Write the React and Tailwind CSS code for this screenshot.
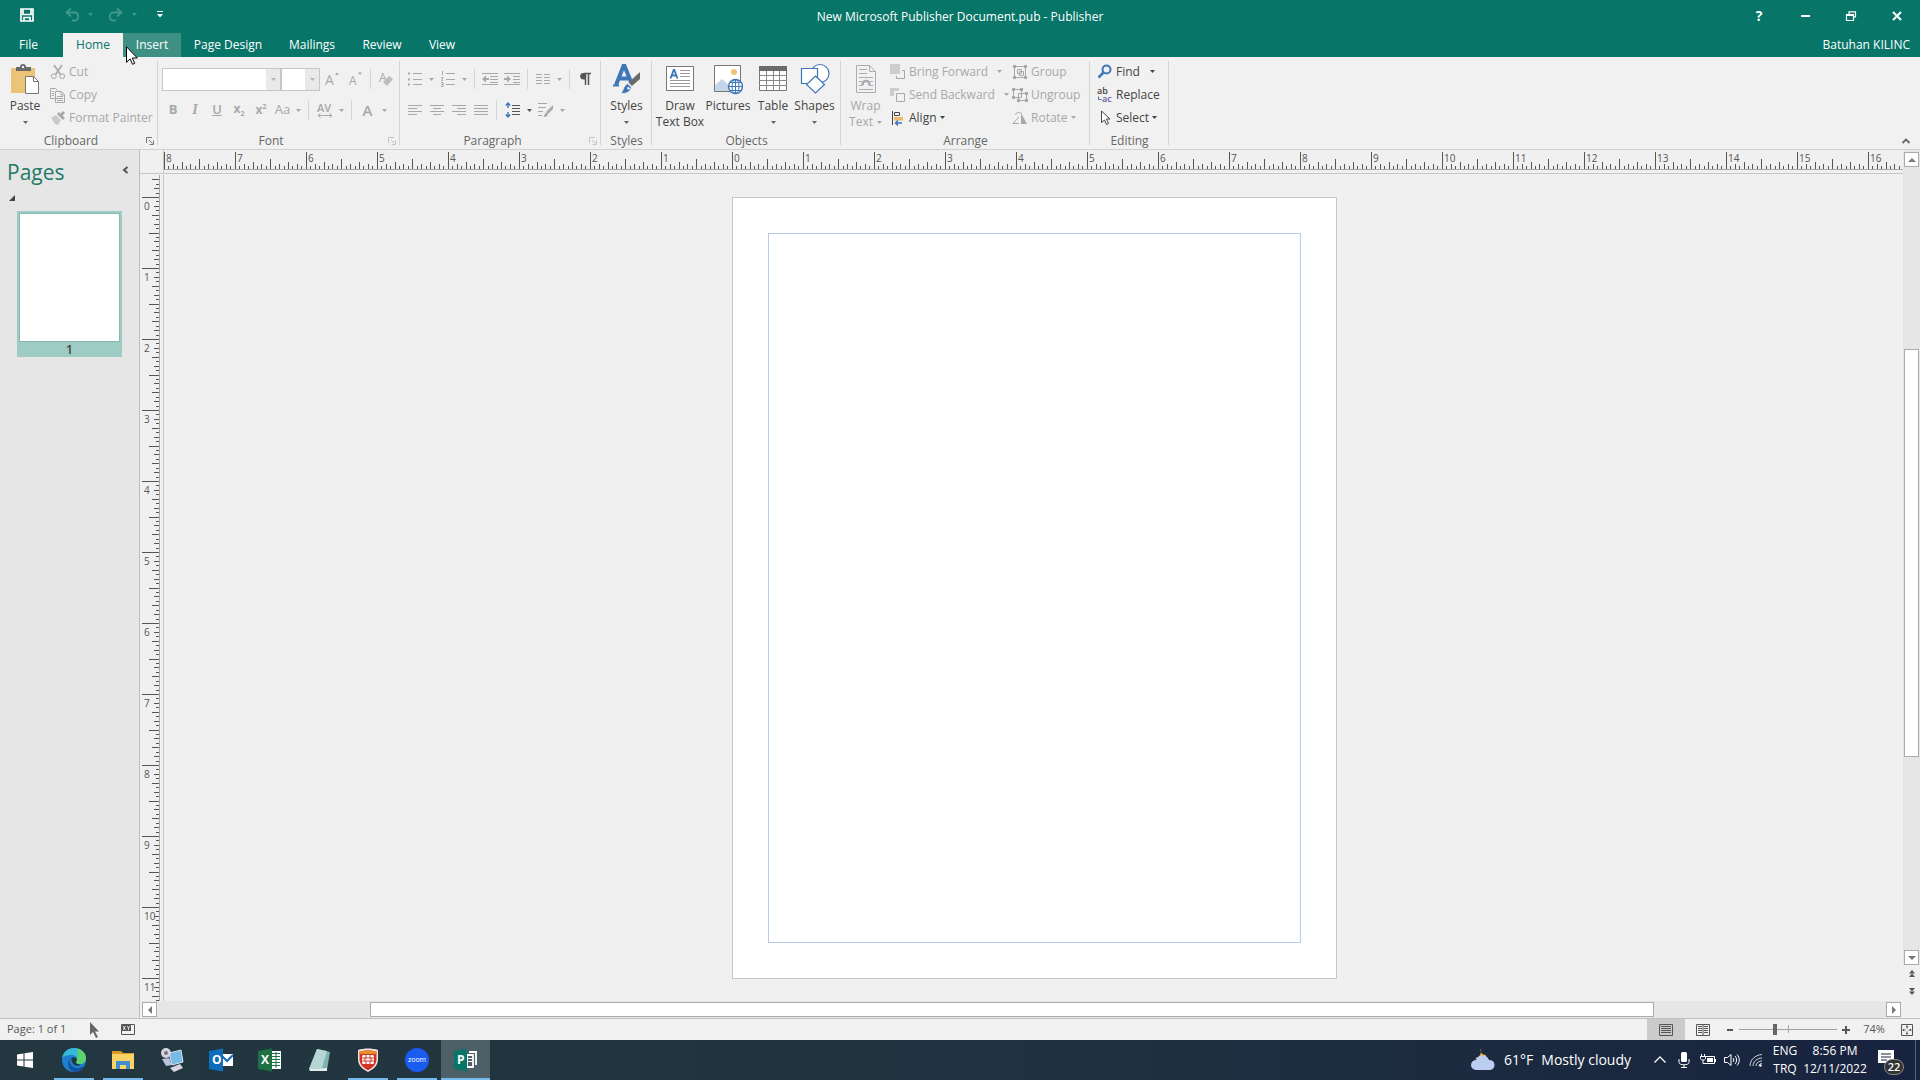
import React, { useState } from 'react';
import clsx from 'clsx';

const INCH = 71;

const Caret = ({ className }) => (
  <svg viewBox="0 0 5 3" className={clsx('w-[5px] h-[3px] shrink-0', className)} fill="currentColor">
    <path d="M0 0h5L2.5 3z" />
  </svg>
);

const Icon = ({ size = 'w-4 h-4', box = '0 0 16 16', className, children }) => (
  <svg viewBox={box} className={clsx(size, 'shrink-0 overflow-visible', className)} fill="none" stroke="currentColor" strokeWidth="1">
    {children}
  </svg>
);

/* ---------- ribbon building blocks ---------- */

const Group = ({ label, width, launcher, dim, children }) => (
  <section className={clsx('relative shrink-0 flex flex-col', width)} aria-label={label}>
    <div className="h-[76px] flex">{children}</div>
    <div className={clsx('h-4 flex items-center justify-center text-[#666666] leading-4', launcher && 'pr-4')}>{label}</div>
    {launcher && (
      <button aria-label={`${label} settings`} className={clsx('absolute right-1 bottom-1', dim ? 'text-[#c4c4c4]' : 'text-[#777777]')}>
        <Icon size="w-2 h-2" box="0 0 8 8">
          <path d="M.5 6V.5H6M3 3l3.500 3.500M7.500 3.500v4h-4" />
        </Icon>
      </button>
    )}
    <div className="absolute right-0 top-1 bottom-1 w-px bg-[#d4d4d4]" />
  </section>
);

const BigButton = ({ icon, lines, width, caret, disabled }) => (
  <button
    disabled={disabled}
    className={clsx('flex flex-col items-center pt-1.5 leading-4 whitespace-nowrap', width, disabled ? 'text-[#a8a8a8]' : 'text-[#444444]')}
  >
    <span className="h-8 flex items-center mb-[3px]">{icon}</span>
    {lines.map((line, i) => (
      <span key={line} className="h-4 flex items-center gap-1">
        {line}
        {caret === 'inline' && i === lines.length - 1 && <Caret />}
      </span>
    ))}
    {caret === 'below' && <span className="h-4 flex items-center text-[#666666]"><Caret /></span>}
  </button>
);

const RowButton = ({ icon, label, caret, disabled, gap }) => (
  <button
    disabled={disabled}
    className={clsx('h-[23px] flex items-center gap-[3px] whitespace-nowrap', disabled ? 'text-[#a8a8a8]' : 'text-[#444444]')}
  >
    {icon}
    <span>{label}</span>
    {caret && <Caret className={gap} />}
  </button>
);

const Tool = ({ width = 'w-[22px]', label, enabled, caret, children }) => (
  <button
    aria-label={label}
    disabled={!enabled}
    className={clsx('h-6 shrink-0 flex items-center justify-center gap-1.5', width, enabled ? 'text-[#555555]' : 'text-[#a8a8a8]')}
  >
    {children}
    {caret && <Caret />}
  </button>
);

const Divider = () => <div className="w-px h-5 mx-1 shrink-0 bg-[#d4d4d4]" />;

/* ---------- ribbon groups ---------- */

const PasteIcon = () => (
  <svg viewBox="0 0 30 32" className="w-[30px] h-8">
    <path d="M1 5h24v25H1z" fill="#ecc477" />
    <path d="M6 4h4a3 3 0 0 1 6 0h5v4H6z" fill="#6a6a6a" />
    <circle cx="13" cy="4" r="1.200" fill="#f1f1f1" />
    <path d="M15.500 13.500h8l5 5v12h-13z" fill="#fff" stroke="#777" />
    <path d="M23.500 13.500v5h5" fill="none" stroke="#777" />
  </svg>
);

const Clipboard = () => (
  <Group label="Clipboard" width="w-[158px]" launcher>
    <BigButton width="w-[50px]" icon={<PasteIcon />} lines={['Paste']} caret="below" />
    <div className="pt-[3px]">
      <RowButton
        disabled
        label="Cut"
        icon={
          <Icon>
            <path d="M4 1l6.500 9.500M12 1L5.500 10.500" strokeWidth="1.600" />
            <circle cx="3.800" cy="12.200" r="2.400" />
            <circle cx="12.200" cy="12.200" r="2.400" />
          </Icon>
        }
      />
      <RowButton
        disabled
        label="Copy"
        icon={
          <Icon>
            <path d="M7 11.500H.5v-10h5l2 2M5.500 4.500h6l3 3v8h-9zM11 4.500v3.500h3.500M2 4.500h2M2 6.500h2M2 8.500h2M7 9.500h6M7 11.500h6M7 13.500h6" />
          </Icon>
        }
      />
      <RowButton
        disabled
        label="Format Painter"
        icon={
          <Icon>
            <path d="M1 8l5-3 5 5-3 5-3-1z" fill="#c9c9c9" stroke="none" />
            <path d="M7 4l6 6 2-2-2.500-2.500L15 3l-2-2-2.500 2.500L9 2z" fill="currentColor" stroke="none" />
          </Icon>
        }
      />
    </div>
  </Group>
);

const Picker = ({ label, width }) => (
  <div className={clsx('flex h-[23px] border border-[#c6c6c6] bg-white', width)}>
    <select aria-label={label} disabled className="appearance-none flex-1 min-w-0 outline-none" />
    <span className="w-3.5 flex items-center justify-center bg-[#e9e9e9] text-[#b5b5b5]"><Caret /></span>
  </div>
);

const Font = () => (
  <Group label="Font" width="w-[242px]" launcher dim>
    <div className="pt-2.5 pl-1 flex flex-col gap-[7px]">
      <div className="h-6 flex items-center">
        <Picker label="Font" width="w-[119px]" />
        <Picker label="Font size" width="w-[39px]" />
        <Tool label="Increase font size" width="w-6">
          <Icon>
            <text x="1" y="14" fontSize="14" fill="currentColor" stroke="none">A</text>
            <path d="M11 4l2-2.500L15 4z" fill="currentColor" stroke="none" />
          </Icon>
        </Tool>
        <Tool label="Decrease font size">
          <Icon>
            <text x="2" y="14" fontSize="12" fill="currentColor" stroke="none">A</text>
            <path d="M11 1.500l2 2.500 2-2.500z" fill="currentColor" stroke="none" />
          </Icon>
        </Tool>
        <Divider />
        <Tool label="Clear formatting">
          <Icon>
            <text x="1" y="11" fontSize="12" fill="currentColor" stroke="none">A</text>
            <path d="M5 11l6-6 4 3-6 7z" fill="#bdbdbd" stroke="none" />
          </Icon>
        </Tool>
      </div>
      <div className="h-6 flex items-center">
        <Tool label="Bold"><b className="text-[13px]">B</b></Tool>
        <Tool label="Italic"><i className="font-['Liberation_Serif',serif] font-bold text-sm">I</i></Tool>
        <Tool label="Underline"><span className="text-[13px] font-semibold underline">U</span></Tool>
        <Tool label="Subscript"><b>x<span className="text-[7px] align-sub">2</span></b></Tool>
        <Tool label="Superscript"><b>x<span className="text-[7px] align-super">2</span></b></Tool>
        <Tool label="Change case" width="w-8" caret><span className="text-[13px]">Aa</span></Tool>
        <Divider />
        <Tool label="Character spacing" width="w-[34px]" caret>
          <Icon>
            <text x="0" y="10" fontSize="11" fontWeight="600" fill="currentColor" stroke="none">AV</text>
            <path d="M1 13.500h14M3.500 11.500l-2.500 2 2.500 2M12.500 11.500l2.500 2-2.500 2" />
          </Icon>
        </Tool>
        <Divider />
        <Tool label="Font color" width="w-[38px]" caret><span className="text-[15px] font-semibold mr-1">A</span></Tool>
      </div>
    </div>
  </Group>
);

const alignPaths = {
  'Align left': 'M1 3.500h14M1 6.500h9M1 9.500h14M1 12.500h9',
  Center: 'M1 3.500h14M4 6.500h8M1 9.500h14M4 12.500h8',
  'Align right': 'M1 3.500h14M6 6.500h9M1 9.500h14M6 12.500h9',
  Justify: 'M1 3.500h14M1 6.500h14M1 9.500h14M1 12.500h14',
};

const Paragraph = () => (
  <Group label="Paragraph" width="w-[201px]" launcher dim>
    <div className="pt-2.5 pl-1 flex flex-col gap-[7px]">
      <div className="h-6 flex items-center">
        <Tool label="Bullets" width="w-[33px]" caret>
          <Icon>
            <path d="M6 2.500h9M6 8.500h9M6 13.500h9" />
            <path d="M1 1.500h2v2H1zM1 7.500h2v2H1zM1 12.500h2v2H1z" fill="currentColor" stroke="none" />
          </Icon>
        </Tool>
        <Tool label="Numbering" width="w-[33px]" caret>
          <Icon>
            <path d="M6 2.500h9M6 8.500h9M6 13.500h9M2.500 0v4M1 6.500h2L1.500 9.500H3M1 11.500h2v4H1M1.500 13.500H3" />
          </Icon>
        </Tool>
        <Divider />
        <Tool label="Decrease indent">
          <Icon>
            <path d="M0 2.500h16M8 5.500h8M8 8.500h8M8 11.500h8M0 13.500h16" />
            <path d="M0 8l4-3.500V7h3v2H4v2.500z" fill="currentColor" stroke="none" />
          </Icon>
        </Tool>
        <Tool label="Increase indent">
          <Icon>
            <path d="M0 2.500h16M9 5.500h7M9 8.500h7M9 11.500h7M0 13.500h16" />
            <path d="M7 8L3 4.500V7H0v2h3v2.500z" fill="currentColor" stroke="none" />
          </Icon>
        </Tool>
        <Divider />
        <Tool label="Columns" width="w-[33px]" caret>
          <Icon>
            <path d="M1 3.500h6M9 3.500h6M1 6.500h6M9 6.500h6M1 9.500h6M9 9.500h6M1 12.500h6M9 12.500h6" />
          </Icon>
        </Tool>
        <Divider />
        <Tool label="Show special characters" enabled>
          <Icon>
            <path d="M7 2.500h7M8.500 2v12M11.500 2v12" strokeWidth="1.500" />
            <path d="M8.500 2H6.500a3.300 3.300 0 0 0 0 6.600h2z" fill="currentColor" stroke="none" />
          </Icon>
        </Tool>
      </div>
      <div className="h-6 flex items-center">
        {Object.entries(alignPaths).map(([label, d]) => (
          <Tool key={label} label={label}>
            <Icon><path d={d} /></Icon>
          </Tool>
        ))}
        <Divider />
        <Tool label="Line spacing" width="w-[34px]" enabled caret>
          <Icon>
            <path d="M7 3.500h8M7 6.500h8M7 9.500h8M7 12.500h8" />
            <path d="M3 1v5M3 10v5M.8 3.500L3 1l2.200 2.500M.8 12.500L3 15l2.200-2.500" stroke="#3f76b8" strokeWidth="1.400" />
          </Icon>
        </Tool>
        <Tool label="Paragraph styles" width="w-[33px]" caret>
          <Icon>
            <path d="M0 1.500h9M0 5.500h8M0 9.500h5M0 13.500h4" />
            <path d="M15 3v4l-5 5-2-2zM8 10.500l2 2c-1 2.500-3 2.500-5 2.500 2-1 1-3 3-4.500z" fill="currentColor" stroke="none" />
          </Icon>
        </Tool>
      </div>
    </div>
  </Group>
);

const Styles = () => (
  <Group label="Styles" width="w-[51px]">
    <BigButton
      width="w-[51px]"
      lines={['Styles']}
      caret="below"
      icon={
        <svg viewBox="0 0 30 32" className="w-[30px] h-8" fill="none">
          <path d="M4 22L11.500 3h1L19 19M7 15.500h9" stroke="#3f76b8" strokeWidth="4" />
          <path d="M1 22.500h6M14 22.500h3" stroke="#3f76b8" strokeWidth="2" />
          <path d="M28 9v7l-8 7-3.500-3.500z" fill="#6a6a6a" />
          <path d="M15.500 20.500l4 3.500c-1 5-5 7-11 6.500 3-2 2-7 7-10z" fill="#3f76b8" stroke="#f1f1f1" />
          <path d="M15.500 24.500l2 1.500" stroke="#fff" strokeWidth="2" />
        </svg>
      }
    />
  </Group>
);

const Objects = () => (
  <Group label="Objects" width="w-[189px]">
    <BigButton
      width="w-[46px] ml-[5px]"
      lines={['Draw', 'Text Box']}
      icon={
        <svg viewBox="0 0 30 32" className="w-[30px] h-8" fill="none">
          <path d="M1.500 3.500h27v24h-27z" fill="#fff" stroke="#777" />
          <path d="M5.500 15.500L8.700 7h.6l3.200 8.500M6.800 12.500h4.500" stroke="#3f76b8" strokeWidth="1.800" />
          <path d="M15 7.500h10M15 10.500h10M15 13.500h10M5 17.500h20M5 20.500h20M5 23.500h20" stroke="#9a9a9a" />
        </svg>
      }
    />
    <BigButton
      width="w-[50px]"
      lines={['Pictures']}
      icon={
        <svg viewBox="0 0 30 32" className="w-[30px] h-8" fill="none">
          <path d="M1.500 2.500h26v26h-26z" fill="#fff" stroke="#777" />
          <circle cx="21" cy="9" r="3" fill="#ecc477" />
          <path d="M2 28V22l7-6 8 7v5z" fill="#c5d6e8" />
          <circle cx="22.500" cy="23.500" r="7" fill="#fff" stroke="#3f76b8" strokeWidth="1.400" />
          <path d="M22.500 16.500v14M15.500 23.500h14M17 19.500h11M17 27.500h11" stroke="#3f76b8" />
          <ellipse cx="22.500" cy="23.500" rx="3.500" ry="7" stroke="#3f76b8" />
        </svg>
      }
    />
    <BigButton
      width="w-10"
      lines={['Table']}
      caret="below"
      icon={
        <svg viewBox="0 0 30 32" className="w-[30px] h-8" fill="none">
          <path d="M1.500 3.500h27v24h-27z" fill="#fff" stroke="#777" />
          <path d="M1 3h28v5H1z" fill="#6a6a6a" />
          <path d="M1 12.500h28M1 17.500h28M1 22.500h28M8.500 8v20M15.500 8v20M21.500 8v20" stroke="#8a8a8a" />
        </svg>
      }
    />
    <BigButton
      width="w-[43px]"
      lines={['Shapes']}
      caret="below"
      icon={
        <svg viewBox="0 0 30 32" className="w-[30px] h-8" stroke="#3f76b8" strokeWidth="1.200" fill="#fff">
          <circle cx="20" cy="10.500" r="9" />
          <path d="M1.500 5.500h16v15h-16z" />
          <path d="M15.500 13l9 8.500-9 8.500-9-8.500z" />
        </svg>
      }
    />
  </Group>
);

const Arrange = () => (
  <Group label="Arrange" width="w-[249px]">
    <BigButton
      disabled
      width="w-[41px] ml-1"
      lines={['Wrap', 'Text']}
      caret="inline"
      icon={
        <svg viewBox="0 0 22 32" className="w-[22px] h-8" fill="none" stroke="#b0aab4">
          <path d="M1.500 2.500h13l6 6v21h-19z" />
          <path d="M14.500 2.500v6h6M4 6.500h8M4 10.500h8M4 14.500h14M4 18.500h3M15 18.500h3M4 22.500h3M15 22.500h3M4 26.500h14" />
          <path d="M7.500 22.500c0-6 7-6 7 0" strokeWidth="2.500" />
        </svg>
      }
    />
    <div className="pt-[3px] ml-1 w-[122px]">
      <RowButton
        disabled
        label="Bring Forward"
        caret
        gap="ml-1.5"
        icon={
          <Icon>
            <path d="M0 0h10v10H0z" fill="#cdcdcd" stroke="none" />
            <path d="M12 6.500h2.500v8h-8V12" />
          </Icon>
        }
      />
      <RowButton
        disabled
        label="Send Backward"
        caret
        gap="ml-1.5"
        icon={
          <Icon>
            <path d="M0 1h9v3H4v5H0z" fill="#cdcdcd" stroke="none" />
            <path d="M6.500 6.500h8v8h-8z" />
          </Icon>
        }
      />
      <RowButton
        label="Align"
        caret
        icon={
          <Icon>
            <path d="M2.500 1v14M4.500 2.500h5v3h-5z" />
            <path d="M4 7h9v3.500H4z" fill="#ecb96a" stroke="none" />
            <path d="M12 13H5.500M8 10.500L5.500 13 8 15.500" stroke="#3f76b8" strokeWidth="1.500" />
          </Icon>
        }
      />
    </div>
    <div className="pt-[3px]">
      <RowButton
        disabled
        label="Group"
        icon={
          <Icon>
            <path d="M2.500 2.500h11v11h-11zM5.500 5.500h4v4h-4zM7.500 7.500h4v4h-4z" />
            <path d="M1 1h3v3H1zM12 1h3v3h-3zM1 12h3v3H1zM12 12h3v3h-3z" fill="currentColor" stroke="none" />
          </Icon>
        }
      />
      <RowButton
        disabled
        label="Ungroup"
        icon={
          <Icon>
            <path d="M1.500 2.500h8v8h-8zM6.500 6.500h8v7h-8z" />
            <path d="M0 1h3v3H0zM8 1h3v3H8zM0 9h3v3H0zM13 5h3v3h-3zM13 12h3v3h-3zM5 12h3v3H5z" fill="currentColor" stroke="none" />
          </Icon>
        }
      />
      <RowButton
        disabled
        label="Rotate"
        caret
        icon={
          <Icon>
            <path d="M7 13.500H.8L7 7M3.500 5c1-3 4-3.500 6-1.500" />
            <path d="M9 3v11h6z" fill="currentColor" stroke="none" />
          </Icon>
        }
      />
    </div>
  </Group>
);

const Editing = () => (
  <Group label="Editing" width="w-[79px]">
    <div className="pt-[3px] pl-[7px]">
      <RowButton
        label="Find"
        caret
        gap="ml-[7px]"
        icon={
          <Icon>
            <circle cx="9.500" cy="5.500" r="4" stroke="#3f76b8" strokeWidth="2" />
            <path d="M6.500 8.500l-5 5" stroke="#3f76b8" strokeWidth="2.500" />
          </Icon>
        }
      />
      <RowButton
        label="Replace"
        icon={
          <Icon>
            <text x="0" y="7" fontSize="9" fontWeight="600" fill="#444" stroke="none">ab</text>
            <text x="5" y="15" fontSize="9" fontWeight="600" fill="#6a58a0" stroke="none">ac</text>
            <path d="M1.500 9.500v3h3" stroke="#3f76b8" />
          </Icon>
        }
      />
      <RowButton
        label="Select"
        caret
        icon={
          <Icon>
            <path d="M4.500 1v11.500l3-2.500 2 4.500 2-1-2-4.500h3.500z" fill="#fff" />
          </Icon>
        }
      />
    </div>
  </Group>
);

/* ---------- rulers ---------- */

const tickLength = (n) => {
  if (n % 16 === 0) return 17;
  if (n % 8 === 0) return 10;
  if (n % 4 === 0) return 7;
  if (n % 2 === 0) return 5;
  return 3;
};

// 25 inches, centred on the 8.5in page
const HorizontalRuler = () => {
  const from = -8.25 * 16;
  const ticks = Array.from({ length: 25 * 16 }, (_, i) => from + i);
  return (
    <div className="h-6 flex-1 min-w-0 overflow-hidden flex justify-center border-b border-[#c6c6c6]">
      <svg className="w-[1775px] h-5 shrink-0" viewBox="0 0 1775 20" shapeRendering="crispEdges">
        <path d="M0 19.500h1775" stroke="#a8a8a8" />
        {ticks.map((n) => {
          const x = Math.round(((n - from) * INCH) / 16) + 0.5;
          return <path key={n} d={`M${x} 19v-${tickLength(n)}`} stroke="#555" />;
        })}
        {ticks.filter((n) => n % 16 === 0).map((n) => (
          <text key={n} x={Math.round(((n - from) * INCH) / 16) + 2} y="12" fontSize="10" fill="#555">
            {Math.abs(n / 16)}
          </text>
        ))}
      </svg>
    </div>
  );
};

const VerticalRuler = () => {
  const ticks = Array.from({ length: 188 }, (_, i) => i - 4);
  return (
    <div className="w-6 shrink-0 overflow-hidden border-r border-[#c6c6c6]">
      <svg className="w-5 h-[840px]" viewBox="0 0 20 840" shapeRendering="crispEdges">
        <path d="M19.500 0v840" stroke="#a8a8a8" />
        {ticks.map((n) => {
          const y = 22 + Math.round((n * INCH) / 16) + 0.5;
          return <path key={n} d={`M19 ${y}h-${tickLength(n)}`} stroke="#555" />;
        })}
        {ticks.filter((n) => n % 16 === 0).map((n) => (
          <text key={n} x="4" y={35 + (n / 16) * INCH} fontSize="10" fill="#555">
            {n / 16}
          </text>
        ))}
      </svg>
    </div>
  );
};

const ScrollButton = ({ label, d }) => (
  <button aria-label={label} className="w-[15px] h-[15px] shrink-0 flex items-center justify-center bg-white border border-[#ababab]">
    <svg viewBox="0 0 8 8" className="w-2 h-2" fill="#777777"><path d={d} /></svg>
  </button>
);

const PageJump = ({ label, d }) => (
  <button aria-label={label} className="w-4 h-[17px] flex items-center justify-center">
    <svg viewBox="0 0 8 8" className="w-2 h-2" fill="#555555"><path d={d} /></svg>
  </button>
);

const Workspace = () => (
  <main className="flex-1 min-h-0 flex bg-[#f0f0f0]">
    <aside className="w-[139px] shrink-0 bg-[#e6e6e6]">
      <div className="flex items-start justify-between pt-1.5 pl-[7px] pr-2.5">
        <h2 className="text-[21px] leading-8 text-[#217a68]">Pages</h2>
        <button aria-label="Collapse pages" className="pt-2.5">
          <Icon size="w-[7px] h-2" box="0 0 7 8" className="text-[#555555]"><path d="M5.500 1L2 4l3.500 3" strokeWidth="2" /></Icon>
        </button>
      </div>
      <svg viewBox="0 0 6 6" className="w-1.5 h-1.5 ml-[9px] mt-[7px]" fill="#444444"><path d="M6 0v6H0z" /></svg>
      <button className="mt-2.5 ml-[17px] w-[105px] bg-[#9ecbc3] p-0.5 pb-0 flex flex-col text-[#444444]">
        <span className="w-full h-[129px] bg-white border border-[#86bab1]" />
        <span className="w-full h-[15px] text-center leading-4 font-semibold">1</span>
      </button>
    </aside>

    <div className="flex-1 min-w-0 flex flex-col border-l border-[#bdbdbd]">
      <div className="flex-1 min-h-0 flex">
        <div className="flex-1 min-w-0 flex flex-col">
          <div className="flex">
            <div className="w-6 h-6 shrink-0 border-r border-b border-[#c6c6c6]" />
            <HorizontalRuler />
          </div>
          <div className="flex-1 min-h-0 flex pt-px">
            <VerticalRuler />
            <div className="flex-1 min-w-0 overflow-hidden flex justify-center items-start pt-[22px] pl-0.5">
              <div className="w-[605px] h-[782px] shrink-0 bg-white border border-[#c6c6c6] p-[35px]">
                <div className="w-full h-full border border-[#b5cbee]" />
              </div>
            </div>
          </div>
          <div className="h-[17px] flex items-center bg-[#e6e6e6]">
            <span className="w-0.5 h-full bg-[#f0f0f0]" />
            <ScrollButton label="Scroll left" d="M6 0v8L2 4z" />
            <div className="flex-1 h-[15px] flex">
              <div className="w-[12.300%]" />
              <div className="w-[74.300%] bg-white border border-[#ababab]" />
            </div>
            <ScrollButton label="Scroll right" d="M2 0v8l4-4z" />
            <span className="w-0.5 h-full bg-[#f0f0f0]" />
          </div>
        </div>
        <div className="w-[17px] shrink-0 flex flex-col items-center bg-[#e6e6e6] pt-0.5">
          <ScrollButton label="Scroll up" d="M0 6h8L4 2z" />
          <div className="flex-1 w-[15px] flex flex-col">
            <div className="h-[23.300%]" />
            <div className="h-[52%] bg-white border border-[#ababab]" />
          </div>
          <ScrollButton label="Scroll down" d="M0 2h8L4 6z" />
          <div className="w-full h-[53px] bg-[#f0f0f0] flex flex-col items-center">
            <PageJump label="Previous page" d="M4 0l3 3.500H1zM4 3.500L7 7H1z" />
            <PageJump label="Next page" d="M4 8L1 4.500h6zM4 4.500L1 1h6z" />
          </div>
        </div>
      </div>
    </div>
  </main>
);

/* ---------- status bar ---------- */

const StatusBar = () => {
  const [zoom, setZoom] = useState(36);
  return (
    <footer className="h-[22px] shrink-0 flex items-center border-t border-[#c0c0c0] bg-[#f1f1f1] text-[#555555]">
      <span className="w-[86px] pl-[7px] text-[11px] whitespace-nowrap">Page: 1 of 1</span>
      <Icon className="text-[#666666]"><path d="M4 0v13l3-3 3 6 2-1-3-5.500h4z" fill="currentColor" stroke="none" /></Icon>
      <Icon size="w-3.5 h-3" box="0 0 14 12" className="ml-[19px]">
        <path d="M.5.5h13v10H.5z" />
        <path d="M1 1h9v6H1z" fill="currentColor" stroke="none" />
        <path d="M2 2l2.500 4M4.500 2L2 6M6 2l1.500 2L9 2M7.500 4v2" stroke="#fff" strokeWidth=".8" />
      </Icon>
      <div className="ml-auto flex items-center h-full">
        <button aria-label="Single page" className="w-[38px] h-full flex items-center justify-center bg-[#cbcbcb]">
          <Icon size="w-3.5 h-3" box="0 0 14 12"><path d="M.5.5h13v11H.5zM2 2.500h10M2 4.500h10M2 6.500h10M2 8.500h10" /></Icon>
        </button>
        <button aria-label="Two-page spread" className="w-9 h-full flex items-center justify-center">
          <Icon size="w-3.5 h-3" box="0 0 14 12"><path d="M.5.5h13v11H.5zM7 1v10M2 2.500h4M2 4.500h4M2 6.500h4M2 8.500h4M8 2.500h4M8 4.500h4M8 6.500h4M8 8.500h4" /></Icon>
        </button>
        <button aria-label="Zoom out" className="w-[18px] flex justify-center"><span className="w-1.5 h-0.5 bg-[#555555]" /></button>
        <div className="relative w-[98px] h-full flex items-center">
          <div className="absolute left-1/2 top-1.5 w-px h-2 bg-[#a8a8a8]" />
          <input
            type="range"
            aria-label="Zoom"
            value={zoom}
            onChange={(e) => setZoom(Number(e.target.value))}
            className="relative w-full h-px appearance-none bg-[#a0a0a0] [&::-webkit-slider-thumb]:appearance-none [&::-webkit-slider-thumb]:w-1 [&::-webkit-slider-thumb]:h-[11px] [&::-webkit-slider-thumb]:bg-[#666666]"
          />
        </div>
        <button aria-label="Zoom in" className="w-[18px] flex justify-center">
          <Icon size="w-2 h-2" box="0 0 8 8"><path d="M4 0v8M0 4h8" strokeWidth="2" /></Icon>
        </button>
        <span className="w-[38px] text-center text-[11px]">74%</span>
        <button aria-label="Fit page" className="w-[27px] flex justify-center">
          <Icon size="w-3 h-3" box="0 0 12 12">
            <path d="M.5.5h11v11H.5zM6 1.500v3M6 7.500v3M1.500 6h3M7.500 6h3M5 3l1-1 1 1M5 9l1 1 1-1M3 5L2 6l1 1M9 5l1 1-1 1" />
          </Icon>
        </button>
      </div>
    </footer>
  );
};

/* ---------- taskbar ---------- */

const apps = [
  {
    name: 'Start',
    art: <path d="M4 6.500l6.500-1v6H4zM11.500 5.300L20 4v7.500h-8.500zM4 12.500h6.500v6L4 17.500zM11.500 12.500H20V20l-8.500-1.300z" fill="#fff" />,
  },
  {
    name: 'Edge',
    running: true,
    art: (
      <>
        <circle cx="12" cy="12" r="12" fill="#1c7fcf" />
        <path d="M.3 10C1 4 6 0 12 0c7 0 12 5 12 10 0 4-3 6-6 6s-4-1-4-2c0-1 1-1 1-3s-2-4-6-4C5 7 2 8 .3 10z" fill="#35b9d6" />
        <path d="M15 .4c5 1 9 5 9 9.600 0 4-3 6-6 6s-4-1-4-2c1-.5 1.500-2 1-4 1-3 1.500-6 0-9.600z" fill="#5fd16a" />
        <path d="M9 10c-3 4 0 9 5 10 3 .5 6-1 8-2-2 4-6 6-10 6-6-2-8-10-3-14z" fill="#14529b" />
        <path d="M9.500 10c2-1.500 5-.5 5.500 1.500 0 1-1 1.500-1 2.500 0 1.500 2 3 5 2.500-4 3-10 .5-9.500-6.500z" fill="#22373f" />
      </>
    ),
  },
  {
    name: 'File Explorer',
    running: true,
    art: (
      <>
        <path d="M1 3h9l2 2h11v3H1z" fill="#d99b23" />
        <path d="M1 6h22v15H1z" fill="#fbd266" />
        <path d="M5 13h14v8h-4v-4H9v4H5z" fill="#3f8fd2" />
      </>
    ),
  },
  {
    name: 'Remote Assistance',
    art: (
      <>
        <path d="M9 5l12-3 2 12-11 3z" fill="#79b9e6" stroke="#d5e5f2" />
        <circle cx="6" cy="5" r="5" fill="#d6d3dc" />
        <circle cx="6" cy="5" r="2" fill="#77718a" />
        <path d="M2 11l7-1 3 7-6 1z" fill="#b9c3dd" />
        <path d="M10 20l10-4 3 4-9 4z" fill="#d9d4e2" />
      </>
    ),
  },
  {
    name: 'Outlook',
    art: (
      <>
        <path d="M12 6h12v12H12z" fill="#fff" />
        <path d="M13 8l5 5 6-6" stroke="#0f6cbd" strokeWidth="2" fill="none" />
        <path d="M0 3l14-2.500v23L0 21z" fill="#0f6cbd" />
        <text x="3" y="16" fontSize="12" fontWeight="700" fill="#fff">O</text>
      </>
    ),
  },
  {
    name: 'Excel',
    art: (
      <>
        <path d="M12 3h11v18H12z" fill="#fff" />
        <path d="M14 5.500h8M14 8.500h8M14 11.500h8M14 14.500h8M14 17.500h8M18 4v16" stroke="#1e7145" fill="none" />
        <path d="M0 3l14-2.500v23L0 21z" fill="#1e7145" />
        <text x="3" y="16" fontSize="12" fontWeight="700" fill="#fff">X</text>
      </>
    ),
  },
  {
    name: 'Notepad',
    art: (
      <>
        <path d="M10 1l13 3-3 18-18-1z" fill="#7fb0b2" />
        <path d="M10 1l10 2-5 17-13 1z" fill="#b5d6d5" />
        <path d="M2 21l18-1v3H3z" fill="#e4ecec" />
      </>
    ),
  },
  {
    name: 'FortiClient',
    running: true,
    art: (
      <>
        <path d="M2 2c6-2 14-2 20 0v9c0 6-4 10-10 13C6 21 2 17 2 11z" fill="#f0e6e0" />
        <path d="M3.500 3.500c5-1.500 12-1.500 17 0V11c0 5-3 8.500-8.500 11.200C6.500 19.500 3.500 16 3.500 11z" fill="#cf3427" />
        <path d="M3.500 3.500c5-1.500 12-1.500 17 0V6h-17z" fill="#e8892c" />
        <rect x="6" y="7" width="12" height="9" rx="1.500" fill="#fff" />
        <path d="M6 10h12M6 13h12M10 7v3M14 7v3M9 10v3M15 10v3M10 13v3M14 13v3" stroke="#cf3427" fill="none" />
      </>
    ),
  },
  {
    name: 'Zoom',
    running: true,
    art: (
      <>
        <circle cx="12" cy="12" r="12" fill="#1a5cf0" />
        <text x="12" y="14" fontSize="7" textAnchor="middle" fill="#fff">zoom</text>
      </>
    ),
  },
  {
    name: 'Publisher',
    running: true,
    active: true,
    art: (
      <>
        <path d="M13 7h6v12h-6zM15 4h7v13" fill="none" stroke="#fff" strokeWidth="1.800" />
        <path d="M13 10.500h5M13 13.500h5" stroke="#fff" />
        <path d="M0 3l13-2.500v23L0 21z" fill="#077568" />
        <text x="3" y="16" fontSize="12" fontWeight="700" fill="#fff">P</text>
      </>
    ),
  },
];

const Taskbar = () => (
  <nav className="h-10 shrink-0 flex bg-linear-to-r from-[#22373f] via-[#203340] to-[#18233f] text-white">
    {apps.map((app) => (
      <button
        key={app.name}
        aria-label={app.name}
        className={clsx('w-[49px] shrink-0 flex flex-col items-center', app.active && 'bg-[#4d5f67]')}
      >
        <svg viewBox="0 0 24 24" className="w-6 h-6 mt-2 mb-1.5">{app.art}</svg>
        {app.running && <span className={clsx('h-0.5 bg-[#76b9ed]', app.active ? 'w-full' : 'w-10')} />}
      </button>
    ))}
    <div className="ml-auto flex items-center text-xs">
      <button className="flex items-center mr-[17px] text-sm whitespace-nowrap">
        <svg viewBox="0 0 26 26" className="w-[26px] h-[26px] mr-2">
          <path d="M11 1c-1 3 0 7 5 7-1 5-8 6-11 3 4 0 7-4 6-10z" fill="#f2b04a" />
          <path d="M6 23a5 5 0 0 1 0-10 7 7 0 0 1 13 0 5 5 0 0 1 1 10z" fill="#bccdf2" />
        </svg>
        <span className="mr-2">61°F</span>
        <span>Mostly cloudy</span>
      </button>
      <button aria-label="Hidden icons" className="w-6 flex justify-center">
        <Icon><path d="M2.500 10.500L8 5l5.500 5.500" strokeWidth="1.300" /></Icon>
      </button>
      <button aria-label="Microphone" className="w-6 flex justify-center">
        <Icon>
          <rect x="5" y="0" width="6" height="10" rx="1.500" fill="currentColor" stroke="none" />
          <path d="M3 7v3.500c0 3 10 3 10 0V7M8 13v2.500M5 15.500h6" />
        </Icon>
      </button>
      <button aria-label="Battery" className="w-6 flex justify-center">
        <Icon>
          <path d="M4.500 4.500h10v7h-8M15.500 7v3M1.500 2v2M4.500 2v2M.5 4.500h5v2c0 2-5 2-5 0zM3 8v3.500h4" />
          <path d="M7 6h6v4H7z" fill="currentColor" stroke="none" />
        </Icon>
      </button>
      <button aria-label="Volume" className="w-6 flex justify-center">
        <Icon>
          <path d="M.5 5.500h3L7 2.500v11l-3.500-3h-3zM9 6c1 1 1 3 0 4M11 4c2 2 2 6 0 8M13 2.500c3 3 3 8 0 11" />
        </Icon>
      </button>
      <button aria-label="Network" className="w-6 flex justify-center">
        <Icon>
          <path d="M2 14C2 8 7 3 14 2.500M5 14c0-4 4-8 9-8M8 14c0-3 3-5 6-5M11 14c0-1.500 1-2.500 3-2.500" className="opacity-80" />
          <circle cx="12.500" cy="13.500" r="1.200" fill="currentColor" stroke="none" />
        </Icon>
      </button>
      <button className="w-[34px] leading-[18px] text-center">ENG<br />TRQ</button>
      <button className="w-[66px] leading-[18px] text-center whitespace-nowrap">8:56 PM<br />12/11/2022</button>
      <button aria-label="22 notifications" className="relative w-[47px] h-10 flex items-center justify-center">
        <svg viewBox="0 0 18 18" className="w-[18px] h-[18px] mr-3 mb-1">
          <path d="M1 1h16v13h-3v3l-4-3H1z" fill="#fff" />
          <path d="M4 5h10M4 8h10M4 11h6" stroke="#18233f" />
        </svg>
        <span className="absolute left-4 top-[19px] w-5 h-4 rounded-full border border-[#888888] bg-[#333333] text-[11px] leading-[14px] font-semibold">22</span>
      </button>
      <span className="w-px h-full bg-[#5a6377] mr-1" />
    </div>
  </nav>
);

/* ---------- title bar and tabs ---------- */

const tabs = [
  { name: 'Home', width: 'w-[60px]' },
  { name: 'Insert', width: 'w-[58px]' },
  { name: 'Page Design', width: 'w-[94px]' },
  { name: 'Mailings', width: 'w-[74px]' },
  { name: 'Review', width: 'w-[66px]' },
  { name: 'View', width: 'w-[54px]' },
];

const TitleBar = () => (
  <div className="relative h-[33px] flex items-center justify-between text-white">
    <div className="flex items-center h-full pb-1">
      <button aria-label="Save" className="w-[54px] flex justify-center">
        <Icon size="w-3.5 h-3.5" box="0 0 14 14">
          <path d="M1 1h12v12H1zM3 1v5.500h8V1M4 13V9.500h6V13" strokeWidth="1.700" />
        </Icon>
      </button>
      <button aria-label="Undo" disabled className="w-10 ml-1 flex items-center justify-center gap-2 text-[#3f9a8c]">
        <Icon><path d="M7 1.500L2.500 5.500 7 9.500M3 5.500h7.500c5 0 5 8 0 8H8" strokeWidth="1.800" /></Icon>
        <Caret />
      </button>
      <button aria-label="Redo" disabled className="w-10 ml-1 flex items-center justify-center gap-2 text-[#3f9a8c]">
        <Icon><path d="M9 1.500l4.500 4L9 9.500M13 5.500H5.500c-5 0-5 8 0 8H8" strokeWidth="1.800" /></Icon>
        <Caret />
      </button>
      <button aria-label="Customize toolbar" className="ml-[15px]">
        <svg viewBox="0 0 6 7" className="w-1.5 h-[7px]" fill="#fff"><path d="M0 0h6v1H0zM0 3h6L3 6.500z" /></svg>
      </button>
    </div>
    <h1 className="absolute left-1/2 -translate-x-1/2 whitespace-nowrap">New Microsoft Publisher Document.pub - Publisher</h1>
    <div className="flex items-center pb-0.5">
      <button aria-label="Help" className="w-[46px] text-sm leading-5 font-bold">?</button>
      <button aria-label="Minimize" className="w-[46px] flex justify-center"><span className="w-[9px] h-0.5 bg-white" /></button>
      <button aria-label="Restore" className="w-[46px] flex justify-center">
        <Icon size="w-2.5 h-2.5" box="0 0 10 10"><path d="M3 3V.8h6.500v5H7.500M.5 3.500h7v6h-7zM.5 4.500h7" strokeWidth="1.200" /></Icon>
      </button>
      <button aria-label="Close" className="w-[46px] flex justify-center">
        <Icon size="w-2.5 h-2.5" box="0 0 10 10"><path d="M1 1l8 8M9 1L1 9" strokeWidth="2" /></Icon>
      </button>
    </div>
  </div>
);

export default function App() {
  const [active, setActive] = useState('Home');

  return (
    <div className="relative h-screen flex flex-col overflow-hidden bg-[#f1f1f1] text-xs font-['Open_Sans','Noto_Sans',sans-serif]">
      <header className="shrink-0 bg-[#077568]">
        <TitleBar />
        <div className="h-6 flex items-center text-white">
          <button className="w-[57px] mr-1.5">File</button>
          {tabs.map(({ name, width }) => (
            <button
              key={name}
              onClick={() => setActive(name)}
              className={clsx(
                'h-full text-center whitespace-nowrap',
                width,
                active === name ? 'bg-[#f1f1f1] text-[#077568]' : name === 'Insert' && 'bg-[#3d9083]'
              )}
            >
              {name}
            </button>
          ))}
          <button className="ml-auto mr-2.5">Batuhan KILINC</button>
        </div>
      </header>

      <div className="relative h-[93px] shrink-0 flex border-b border-[#d0d0d0]">
        <Clipboard />
        <Font />
        <Paragraph />
        <Styles />
        <Objects />
        <Arrange />
        <Editing />
        <button aria-label="Collapse the ribbon" className="absolute right-2.5 bottom-1 text-[#666666]">
          <Icon size="w-2 h-2" box="0 0 8 8"><path d="M.5 6L4 2.500 7.500 6" strokeWidth="1.800" /></Icon>
        </button>
      </div>

      <Workspace />
      <StatusBar />
      <Taskbar />

      {/* mouse pointer */}
      <svg viewBox="0 0 12 19" className="absolute left-[126px] top-[46px] w-3 h-[19px] pointer-events-none">
        <path d="M.5.8v15.500l3.600-3.400 2.400 5.400 2.200-1-2.400-5.300h5z" fill="#fff" stroke="#000" />
      </svg>
    </div>
  );
}
